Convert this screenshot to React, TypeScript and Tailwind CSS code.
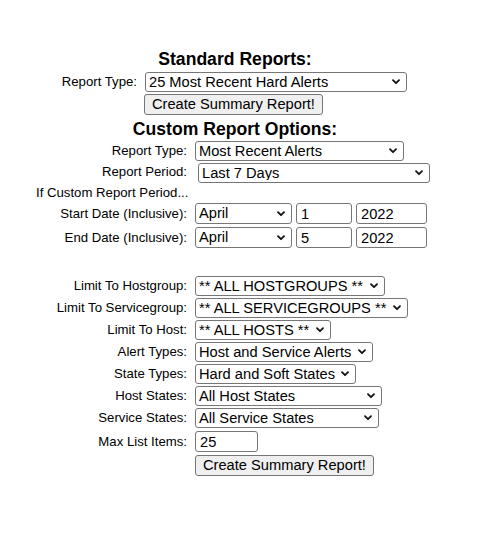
import React from "react";

const Chevron = () => (
  <svg
    className="pointer-events-none absolute right-[7px] top-1/2 -translate-y-1/2"
    width="8"
    height="6"
    viewBox="0 0 8 6"
    fill="none"
  >
    <path d="M1 1.2 L4 4.2 L7 1.2" stroke="#111" strokeWidth="1.8" strokeLinecap="round" strokeLinejoin="round" />
  </svg>
);

const Select = ({ value, className }: { value: string; className: string }) => (
  <div className={`relative shrink-0 ${className}`}>
    <select
      defaultValue={value}
      className="block h-full w-full appearance-none rounded-[3px] border border-[#767676] bg-white pl-[3px] text-[14.67px] leading-none text-black outline-none"
    >
      <option>{value}</option>
    </select>
    <Chevron />
  </div>
);

const TextBox = ({ value, className }: { value: string; className: string }) => (
  <input
    defaultValue={value}
    className={`block shrink-0 rounded-[3px] border border-[#767676] bg-white pl-[4px] text-[14.67px] text-black outline-none ${className}`}
  />
);

const Button = () => (
  <button className="h-[21px] shrink-0 rounded-[3px] border border-[#767676] bg-[#efefef] px-[7px] text-[14.67px] leading-none text-black">
    Create Summary Report!
  </button>
);

const Row = ({ label, children, h = "h-[20px]" }: { label: string; children: React.ReactNode; h?: string }) => (
  <div className={`flex items-center gap-[8px] ${h}`}>
    <div className="w-[187px] shrink-0 text-right text-[13.2px] leading-none">{label}</div>
    {children}
  </div>
);

export default function App() {
  const lower: [string, string, string][] = [
    ["Limit To Hostgroup:", "** ALL HOSTGROUPS **", "w-[190px]"],
    ["Limit To Servicegroup:", "** ALL SERVICEGROUPS **", "w-[213px]"],
    ["Limit To Host:", "** ALL HOSTS **", "w-[136px]"],
    ["Alert Types:", "Host and Service Alerts", "w-[178px]"],
    ["State Types:", "Hard and Soft States", "w-[161px]"],
    ["Host States:", "All Host States", "w-[187px]"],
    ["Service States:", "All Service States", "w-[184px]"],
  ];

  return (
    <div className="min-h-[537px] w-[499px] bg-white pt-[49px] font-['Liberation_Sans',Arial,sans-serif] text-black">
      <div className="w-[470px]">
        <h2 className="text-center text-[17.6px] font-bold leading-[20px]">Standard Reports:</h2>
        <div className="mt-[3px] flex h-[20px] items-center gap-[8px]">
          <div className="w-[137px] shrink-0 text-right text-[13.2px] leading-none">Report Type:</div>
          <Select value="25 Most Recent Hard Alerts" className="h-[20px] w-[262px]" />
        </div>
        <div className="mt-[2px] flex pl-[144px]">
          <Button />
        </div>

        <h2 className="mt-[4px] text-center text-[17.6px] font-bold leading-[20px]">Custom Report Options:</h2>

        <div className="mt-[2px] flex flex-col gap-[2px]">
          <Row label="Report Type:">
            <Select value="Most Recent Alerts" className="h-[20px] w-[209px]" />
          </Row>
          <div className="flex h-[20px] gap-[8px]">
            <div className="w-[187px] shrink-0 pt-[2px] text-right text-[13.2px] leading-none">Report Period:</div>
            <Select value="Last 7 Days" className="ml-[3px] h-[20px] w-[232px]" />
          </div>
        </div>

        <div className="mt-[2px] pl-[36px] text-[13.2px] leading-[15px]">If Custom Report Period...</div>

        <div className="mt-[3px] flex flex-col gap-[3px]">
          {[
            ["Start Date (Inclusive):", "1"],
            ["End Date (Inclusive):", "5"],
          ].map(([label, day]) => (
            <Row key={label} label={label} h="h-[21px]">
              <div className="flex h-[21px] gap-[4px]">
                <Select value="April" className="h-[21px] w-[97px]" />
                <TextBox value={day} className="h-[21px] w-[56px]" />
                <TextBox value="2022" className="h-[21px] w-[71px]" />
              </div>
            </Row>
          ))}
        </div>

        <div className="mt-[28px] flex flex-col gap-[2px]">
          {lower.map(([label, value, w]) => (
            <Row key={label} label={label}>
              <Select value={value} className={`h-[20px] ${w}`} />
            </Row>
          ))}
        </div>

        <div className="mt-[3px]">
          <Row label="Max List Items:" h="h-[21px]">
            <TextBox value="25" className="h-[21px] w-[63px]" />
          </Row>
        </div>
        <div className="mt-[3px] flex pl-[195px]">
          <Button />
        </div>
      </div>
    </div>
  );
}
